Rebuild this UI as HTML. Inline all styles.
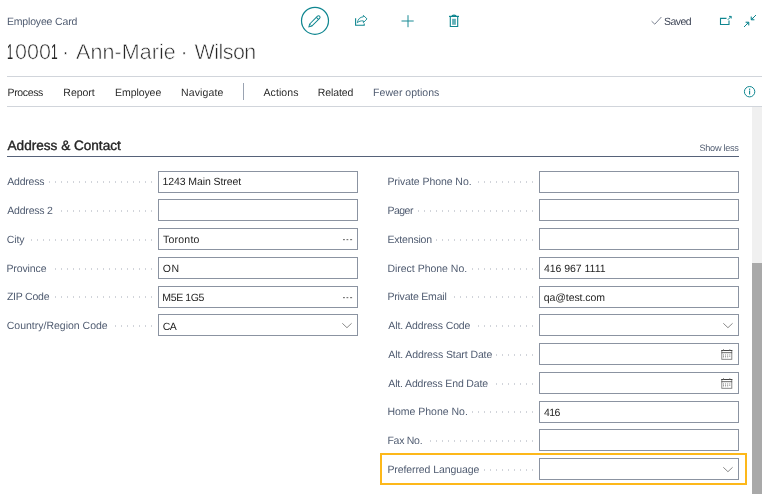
<!DOCTYPE html>
<html lang="en"><head><meta charset="utf-8"><title>Employee Card</title>
<style>
html,body{margin:0;padding:0;background:#fff;}
body{width:770px;height:494px;position:relative;overflow:hidden;font-family:"Liberation Sans",Arial,sans-serif;}
.t{position:absolute;white-space:nowrap;line-height:20px;height:20px;text-rendering:geometricPrecision;}
#page{position:absolute;left:0;top:0;width:770px;height:494px;overflow:hidden;will-change:transform;}
.p{display:inline-block;width:0;position:relative;white-space:nowrap;line-height:20px;height:20px;vertical-align:top;text-rendering:geometricPrecision;}
.lab{background:#fff;padding-right:4px;}
.ln{position:absolute;height:1px;background:#d1d5db;}
.in{position:absolute;box-sizing:border-box;border:1px solid #8b93a1;background:#fff;width:200px;}
.dl{position:absolute;height:2px;background-image:linear-gradient(90deg,#d1d4da 1px,rgba(255,255,255,0) 1px);background-size:6px 2px;background-repeat:repeat-x;}
.thin6{-webkit-text-stroke:0.6px #fff;}
.semi{-webkit-text-stroke:0.38px #262626;}
svg{position:absolute;overflow:visible;}
</style></head><body>
<div id="page">
<div class="ln" style="left:7px;top:76px;width:755px;"></div>
<div class="ln" style="left:7px;top:106px;width:755px;"></div>
<div style="position:absolute;left:243px;top:83px;width:1px;height:17px;background:#9aa3b2;"></div>
<div style="position:absolute;left:752px;top:107px;width:10px;height:387px;background:#f0f0f0;"></div>
<div style="position:absolute;left:752px;top:263px;width:10px;height:231px;background:#a9a9a9;"></div>
<div style="position:absolute;left:7px;top:156px;width:732px;height:1px;background:#566279;"></div>
<div class="dl" style="left:13.0px;top:181.0px;width:140.0px;"></div>
<div class="in" style="left:158px;top:171px;height:22px;"></div>
<div class="dl" style="left:13.0px;top:209.7px;width:140.0px;"></div>
<div class="in" style="left:158px;top:199px;height:22px;"></div>
<div class="dl" style="left:13.0px;top:239.0px;width:140.0px;"></div>
<div class="in" style="left:158px;top:228px;height:22px;"></div>
<svg style="left:342.8px;top:238.9px" width="10" height="2" viewBox="0 0 10 2"><g fill="#7a7a7a"><rect x="0" y="0" width="1.9" height="1.2"/><rect x="3.5" y="0" width="1.8" height="1.2"/><rect x="7.1" y="0" width="2" height="1.2"/></g></svg>
<div class="dl" style="left:13.0px;top:267.9px;width:140.0px;"></div>
<div class="in" style="left:158px;top:257px;height:22px;"></div>
<div class="dl" style="left:13.0px;top:296.1px;width:140.0px;"></div>
<div class="in" style="left:158px;top:286px;height:22px;"></div>
<svg style="left:342.8px;top:296.9px" width="10" height="2" viewBox="0 0 10 2"><g fill="#7a7a7a"><rect x="0" y="0" width="1.9" height="1.2"/><rect x="3.5" y="0" width="1.8" height="1.2"/><rect x="7.1" y="0" width="2" height="1.2"/></g></svg>
<div class="dl" style="left:13.0px;top:325.2px;width:140.0px;"></div>
<div class="in" style="left:158px;top:314px;height:22px;"></div>
<svg style="left:342.0px;top:323.0px" width="10" height="6" viewBox="0 0 10 6"><path d="M0.3 0.3 L4.95 4.7 L9.6 0.3" fill="none" stroke="#8a8a8a" stroke-width="1"/></svg>
<div class="dl" style="left:394.0px;top:181.0px;width:140.0px;"></div>
<div class="in" style="left:539px;top:171px;height:22px;"></div>
<div class="dl" style="left:394.0px;top:209.7px;width:140.0px;"></div>
<div class="in" style="left:539px;top:199px;height:22px;"></div>
<div class="dl" style="left:394.0px;top:239.0px;width:140.0px;"></div>
<div class="in" style="left:539px;top:228px;height:22px;"></div>
<div class="dl" style="left:394.0px;top:267.9px;width:140.0px;"></div>
<div class="in" style="left:539px;top:257px;height:22px;"></div>
<div class="dl" style="left:394.0px;top:296.1px;width:140.0px;"></div>
<div class="in" style="left:539px;top:286px;height:22px;"></div>
<div class="dl" style="left:394.0px;top:325.2px;width:140.0px;"></div>
<div class="in" style="left:539px;top:314px;height:22px;"></div>
<svg style="left:723.0px;top:323.0px" width="10" height="6" viewBox="0 0 10 6"><path d="M0.3 0.3 L4.95 4.7 L9.6 0.3" fill="none" stroke="#8a8a8a" stroke-width="1"/></svg>
<div class="dl" style="left:394.0px;top:353.7px;width:140.0px;"></div>
<div class="in" style="left:539px;top:343px;height:22px;"></div>
<svg style="left:721.0px;top:349.0px" width="12" height="11" viewBox="0 0 12 11"><rect x="0.8" y="1.5" width="10" height="8.8" fill="none" stroke="#7d7d7d" stroke-width="0.9"/><path d="M0.3 1.5H11.3" stroke="#444" stroke-width="1" fill="none"/><path d="M0.5 3.7H11.1" stroke="#555" stroke-width="0.9" fill="none"/><path d="M2.5 0.2V1.5M8.8 0.2V1.5" stroke="#777" stroke-width="0.9" fill="none"/><g fill="#b5b5b5"><rect x="2.05" y="5" width="0.9" height="1"/><rect x="4.15" y="5" width="0.9" height="1"/><rect x="6.25" y="5" width="0.9" height="1"/><rect x="8.35" y="5" width="0.9" height="1"/><rect x="2.05" y="8.3" width="0.9" height="0.9"/><rect x="4.15" y="8.3" width="0.9" height="0.9"/><rect x="6.25" y="8.3" width="0.9" height="0.9"/></g><g fill="#777"><rect x="2.05" y="6.5" width="0.9" height="1.3"/><rect x="4.15" y="6.5" width="0.9" height="1.3"/><rect x="6.25" y="6.5" width="0.9" height="1.3"/><rect x="8.35" y="6.5" width="0.9" height="1.3"/></g></svg>
<div class="dl" style="left:394.0px;top:382.8px;width:140.0px;"></div>
<div class="in" style="left:539px;top:372px;height:22px;"></div>
<svg style="left:721.0px;top:378.0px" width="12" height="11" viewBox="0 0 12 11"><rect x="0.8" y="1.5" width="10" height="8.8" fill="none" stroke="#7d7d7d" stroke-width="0.9"/><path d="M0.3 1.5H11.3" stroke="#444" stroke-width="1" fill="none"/><path d="M0.5 3.7H11.1" stroke="#555" stroke-width="0.9" fill="none"/><path d="M2.5 0.2V1.5M8.8 0.2V1.5" stroke="#777" stroke-width="0.9" fill="none"/><g fill="#b5b5b5"><rect x="2.05" y="5" width="0.9" height="1"/><rect x="4.15" y="5" width="0.9" height="1"/><rect x="6.25" y="5" width="0.9" height="1"/><rect x="8.35" y="5" width="0.9" height="1"/><rect x="2.05" y="8.3" width="0.9" height="0.9"/><rect x="4.15" y="8.3" width="0.9" height="0.9"/><rect x="6.25" y="8.3" width="0.9" height="0.9"/></g><g fill="#777"><rect x="2.05" y="6.5" width="0.9" height="1.3"/><rect x="4.15" y="6.5" width="0.9" height="1.3"/><rect x="6.25" y="6.5" width="0.9" height="1.3"/><rect x="8.35" y="6.5" width="0.9" height="1.3"/></g></svg>
<div class="dl" style="left:394.0px;top:411.2px;width:140.0px;"></div>
<div class="in" style="left:539px;top:401px;height:22px;"></div>
<div class="dl" style="left:394.0px;top:439.9px;width:140.0px;"></div>
<div class="in" style="left:539px;top:429px;height:22px;"></div>
<div class="dl" style="left:394.0px;top:469.0px;width:140.0px;"></div>
<div class="in" style="left:539px;top:458px;height:22px;"></div>
<svg style="left:723.0px;top:467.0px" width="10" height="6" viewBox="0 0 10 6"><path d="M0.3 0.3 L4.95 4.7 L9.6 0.3" fill="none" stroke="#8a8a8a" stroke-width="1"/></svg>
<div style="position:absolute;left:380px;top:453px;width:367px;height:32px;box-sizing:border-box;border:2px solid #fdb81a;"></div>
<span id="t0" class="t" style="left:6.92px;top:12.16px;font-size:10.5px;color:#505c71;letter-spacing:-0.163px;">Employee Card</span>
<div class="t" style="left:0;top:41.85px;font-size:0;"><span id="t1" class="p" style="left:7.47px;font-size:21.5px;color:#262626;transform:scaleX(0.508);transform-origin:0 0;">1</span><span id="t2" class="p thin6" style="left:14.98px;font-size:21.5px;color:#262626;letter-spacing:0.087px;">000</span><span id="t3" class="p" style="left:50.99px;font-size:21.5px;color:#262626;transform:scaleX(0.562);transform-origin:0 0;">1</span> <span id="t4" class="p thin6" style="left:62.03px;font-size:21.5px;color:#262626;">·</span> <span id="t5" class="p thin6" style="left:76.10px;font-size:21.5px;color:#262626;letter-spacing:0.066px;">Ann-Marie</span> <span id="t6" class="p thin6" style="left:180.53px;font-size:21.5px;color:#262626;">·</span> <span id="t7" class="p thin6" style="left:194.40px;font-size:21.5px;color:#262626;letter-spacing:-0.515px;">Wilson</span>
</div>
<span id="t8" class="t" style="left:664.00px;top:11.96px;font-size:10.5px;color:#3f4657;letter-spacing:-0.531px;">Saved</span>
<span id="t9" class="t" style="left:7.53px;top:83.16px;font-size:10.5px;color:#2b2b2b;letter-spacing:-0.354px;">Process</span>
<span id="t10" class="t" style="left:63.33px;top:83.16px;font-size:10.5px;color:#2b2b2b;letter-spacing:-0.020px;">Report</span>
<span id="t11" class="t" style="left:115.03px;top:83.16px;font-size:10.5px;color:#2b2b2b;letter-spacing:-0.068px;">Employee</span>
<span id="t12" class="t" style="left:180.93px;top:83.16px;font-size:10.5px;color:#2b2b2b;letter-spacing:0.154px;">Navigate</span>
<span id="t13" class="t" style="left:263.50px;top:83.16px;font-size:10.5px;color:#2b2b2b;letter-spacing:0.083px;">Actions</span>
<span id="t14" class="t" style="left:317.73px;top:83.16px;font-size:10.5px;color:#2b2b2b;letter-spacing:-0.088px;">Related</span>
<span id="t15" class="t" style="left:373.12px;top:83.16px;font-size:10.5px;color:#505c71;letter-spacing:0.023px;">Fewer options</span>
<span id="t16" class="t semi" style="left:7.55px;top:135.89px;font-size:13.6px;color:#262626;letter-spacing:-0.008px;">Address &amp; Contact</span>
<span id="t17" class="t" style="left:699.50px;top:137.51px;font-size:9.2px;color:#505c71;letter-spacing:-0.312px;">Show less</span>
<span id="t18" class="t lab" style="left:7.30px;top:171.96px;font-size:10.5px;color:#505c71;letter-spacing:-0.237px;">Address</span>
<span id="t19" class="t" style="left:162.45px;top:172.46px;font-size:10.5px;color:#252525;letter-spacing:-0.088px;">1243 Main Street</span>
<span id="t20" class="t lab" style="left:7.30px;top:200.66px;font-size:10.5px;color:#505c71;letter-spacing:-0.206px;">Address 2</span>
<span id="t21" class="t lab" style="left:6.80px;top:229.96px;font-size:10.5px;color:#505c71;letter-spacing:-0.100px;">City</span>
<span id="t22" class="t" style="left:162.95px;top:230.46px;font-size:10.5px;color:#252525;letter-spacing:0.238px;">Toronto</span>
<span id="t23" class="t lab" style="left:6.42px;top:258.86px;font-size:10.5px;color:#505c71;letter-spacing:-0.100px;">Province</span>
<span id="t24" class="t" style="left:162.70px;top:259.36px;font-size:10.5px;color:#252525;letter-spacing:0.600px;">ON</span>
<span id="t25" class="t lab" style="left:6.92px;top:287.06px;font-size:10.5px;color:#505c71;letter-spacing:-0.221px;">ZIP Code</span>
<span id="t26" class="t" style="left:162.32px;top:287.56px;font-size:10.5px;color:#252525;letter-spacing:-0.367px;">M5E 1G5</span>
<span id="t27" class="t lab" style="left:6.80px;top:316.16px;font-size:10.5px;color:#505c71;letter-spacing:-0.006px;">Country/Region Code</span>
<span id="t28" class="t" style="left:162.70px;top:316.66px;font-size:10.5px;color:#252525;letter-spacing:-0.600px;">CA</span>
<span id="t29" class="t lab" style="left:387.43px;top:171.96px;font-size:10.5px;color:#505c71;letter-spacing:-0.067px;">Private Phone No.</span>
<span id="t30" class="t lab" style="left:387.43px;top:200.66px;font-size:10.5px;color:#505c71;letter-spacing:-0.500px;">Pager</span>
<span id="t31" class="t lab" style="left:387.43px;top:229.96px;font-size:10.5px;color:#505c71;letter-spacing:-0.178px;">Extension</span>
<span id="t32" class="t lab" style="left:387.43px;top:258.86px;font-size:10.5px;color:#505c71;letter-spacing:-0.015px;">Direct Phone No.</span>
<span id="t33" class="t" style="left:543.95px;top:259.36px;font-size:10.5px;color:#252525;letter-spacing:-0.030px;">416 967 1111</span>
<span id="t34" class="t lab" style="left:387.43px;top:287.06px;font-size:10.5px;color:#505c71;letter-spacing:-0.213px;">Private Email</span>
<span id="t35" class="t" style="left:543.70px;top:287.56px;font-size:10.5px;color:#252525;letter-spacing:-0.078px;">qa@test.com</span>
<span id="t36" class="t lab" style="left:388.30px;top:316.16px;font-size:10.5px;color:#505c71;letter-spacing:-0.120px;">Alt. Address Code</span>
<span id="t37" class="t lab" style="left:388.30px;top:344.66px;font-size:10.5px;color:#505c71;letter-spacing:-0.102px;">Alt. Address Start Date</span>
<span id="t38" class="t lab" style="left:388.30px;top:373.76px;font-size:10.5px;color:#505c71;letter-spacing:-0.147px;">Alt. Address End Date</span>
<span id="t39" class="t lab" style="left:387.43px;top:402.16px;font-size:10.5px;color:#505c71;letter-spacing:-0.012px;">Home Phone No.</span>
<span id="t40" class="t" style="left:543.95px;top:402.66px;font-size:10.5px;color:#252525;letter-spacing:-0.575px;">416</span>
<span id="t41" class="t lab" style="left:387.43px;top:430.86px;font-size:10.5px;color:#505c71;letter-spacing:-0.262px;">Fax No.</span>
<span id="t42" class="t lab" style="left:387.43px;top:459.96px;font-size:10.5px;color:#505c71;letter-spacing:-0.094px;">Preferred Language</span>
<svg style="left:300px;top:6px" width="30" height="30" viewBox="0 0 30 30"><circle cx="15" cy="14.8" r="13.5" fill="none" stroke="#0f8690" stroke-width="1.2"/><g transform="translate(15 14.8) rotate(-45)" fill="none" stroke="#0f8690" stroke-width="1"><path d="M-6.0 -1.5 H5.0 A1.5 1.5 0 0 1 5.0 1.5 H-6.0 L-8.6 0 Z"/><path d="M3.4 -1.5V1.5"/><path d="M-6.0 -1.5V1.5" stroke-width="0.7"/></g></svg>
<svg style="left:355px;top:15px" width="13" height="12" viewBox="0 0 13 12" fill="none" stroke="#0f8690" stroke-width="1.1"><path d="M0.6 3.2 V10.3 H9.2 V8.4"/><path d="M2.35 7.7 C2.9 4.2 5 2 8.4 1.8 V0.4 L12 3.9 L8.4 7.6 V5.9 C5.8 5.6 4 6.3 2.35 7.7 Z" stroke-width="0.9" stroke-linejoin="round"/></svg>
<svg style="left:401px;top:15px" width="13" height="13" viewBox="0 0 13 13"><path d="M7 0.2V12.2M0.5 6H12.7" fill="none" stroke="#1a8b95" stroke-width="1"/></svg>
<svg style="left:448px;top:14px" width="12" height="14" viewBox="0 0 12 14"><path d="M1 2.4H11" stroke="#0f8690" stroke-width="1.2" fill="none"/><path d="M3.9 2.2 C4 0.8 8 0.8 8.1 2.2" stroke="#0f8690" stroke-width="1.2" fill="none"/><path d="M2.3 2.6 V12.5 H9.7 V2.6" stroke="#0f8690" stroke-width="1.1" fill="none"/><rect x="4.1" y="4.8" width="3.8" height="6" fill="#0f8690" opacity="0.65"/></svg>
<svg style="left:651px;top:16px" width="11" height="9" viewBox="0 0 11 9"><path d="M0.6 5.2 L3.8 8.2 L10.4 1" fill="none" stroke="#7a8190" stroke-width="1"/></svg>
<svg style="left:719px;top:15px" width="14" height="11" viewBox="0 0 14 11" fill="none" stroke="#0f8690" stroke-width="1.1"><path d="M7.5 3.4 H1.5 V9.5 H10 V5.6"/><path d="M8.8 4.8 L12.1 1.5 M10 1.4 H12.2 V3.5" stroke-width="1"/></svg>
<svg style="left:743px;top:14px" width="14" height="14" viewBox="0 0 14 14" fill="none" stroke="#0f8690" stroke-width="1"><path d="M13 1 L8.2 5.8 M8.2 2.6 V5.8 H11.4"/><path d="M1 13 L5.8 8.2 M2.6 8.2 H5.8 V11.4"/><path d="M8.2 2.6 V5.8 H11.4 Z M2.6 8.2 H5.8 V11.4 Z" fill="#0f8690" fill-opacity="0.45" stroke="none"/></svg>
<svg style="left:743px;top:85px" width="13" height="13" viewBox="0 0 13 13"><circle cx="6.6" cy="6.7" r="5.2" fill="none" stroke="#0f8690" stroke-width="1"/><path d="M6.6 5.6V9.4" stroke="#0f8690" stroke-width="1.1"/><rect x="6" y="3.6" width="1.2" height="1.2" fill="#0f8690"/></svg>
</div>
</body></html>
